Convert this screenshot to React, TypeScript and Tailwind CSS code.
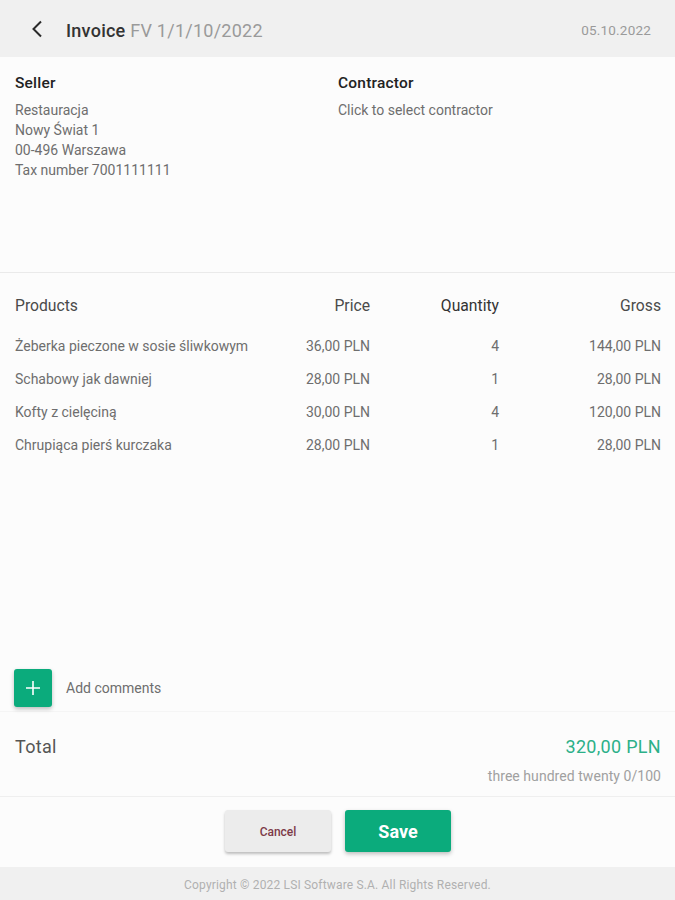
import React from "react";

const productos = [
  { nombre: "Żeberka pieczone w sosie śliwkowym", precio: "36,00 PLN", cantidad: "4", bruto: "144,00 PLN" },
  { nombre: "Schabowy jak dawniej", precio: "28,00 PLN", cantidad: "1", bruto: "28,00 PLN" },
  { nombre: "Kofty z cielęciną", precio: "30,00 PLN", cantidad: "4", bruto: "120,00 PLN" },
  { nombre: "Chrupiąca pierś kurczaka", precio: "28,00 PLN", cantidad: "1", bruto: "28,00 PLN" },
];

const App: React.FC = () => {
  return (
    <div className="w-[675px] h-[900px] flex flex-col bg-[#fcfcfc] font-['Roboto',sans-serif] overflow-hidden">
      {/* Header */}
      <div className="h-[57px] shrink-0 bg-[#f0f0f0] flex items-center pl-[27px] pr-[24px] pt-[3px]">
        <svg width="20" height="20" viewBox="0 0 20 20" fill="none" stroke="#2a2a2a" strokeWidth="2" className="shrink-0 -mt-[3px]">
          <path d="M14 2.5 L6.5 10 L14 17.5" />
        </svg>
        <div className="ml-[19px] text-[18px] tracking-[0.25px] text-[#333]">
          <span className="font-medium">Invoice</span> <span className="text-[#9a9a9a]">FV 1/1/10/2022</span>
        </div>
        <div className="ml-auto text-[13.5px] text-[#9a9a9a] tracking-[0.2px]">05.10.2022</div>
      </div>

      {/* Seller / contractor */}
      <div className="h-[216px] shrink-0 border-b border-[#eaeaea] flex pl-[15px] pt-[16px]">
        <div className="w-[323px]">
          <div className="text-[15.5px] leading-[20px] font-medium text-[#222] tracking-[0.2px]">Seller</div>
          <div className="mt-[7px] text-[14px] leading-[20px] text-[#6e6e6e]">
            <div>Restauracja</div>
            <div>Nowy Świat 1</div>
            <div>00-496 Warszawa</div>
            <div>Tax number 7001111111</div>
          </div>
        </div>
        <div>
          <div className="text-[15.5px] leading-[20px] font-medium text-[#222] tracking-[0.2px]">Contractor</div>
          <div className="mt-[7px] text-[14px] leading-[20px] text-[#6e6e6e]">Click to select contractor</div>
        </div>
      </div>

      {/* Products */}
      <div className="flex-1 px-[14px] pt-[23px]">
        <div className="flex items-center h-[20px] text-[15.7px] text-[#4a4a4a]">
          <div className="w-[276px] pl-[1px]">Products</div>
          <div className="w-[80px] text-right">Price</div>
          <div className="w-[129px] text-right text-[#333]">Quantity</div>
          <div className="w-[162px] text-right">Gross</div>
        </div>
        <div className="mt-[20px] flex flex-col gap-[13px]">
          {productos.map((p) => (
            <div key={p.nombre} className="flex items-center h-[20px] text-[14px] text-[#6e6e6e]">
              <div className="w-[276px] pl-[1px]">{p.nombre}</div>
              <div className="w-[80px] text-right">{p.precio}</div>
              <div className="w-[129px] text-right">{p.cantidad}</div>
              <div className="w-[162px] text-right">{p.bruto}</div>
            </div>
          ))}
        </div>
      </div>

      {/* Comments */}
      <div className="h-[43px] shrink-0 flex items-start pl-[14px] border-b border-[#f5f5f5]">
        <button className="w-[38px] h-[38px] rounded-[3px] bg-[#0bab7c] shadow-[0_2px_4px_rgba(0,0,0,0.25)] flex items-center justify-center">
          <svg width="14" height="14" viewBox="0 0 14 14" stroke="#fff" strokeWidth="1.6" fill="none">
            <path d="M7 0 V14 M0 7 H14" />
          </svg>
        </button>
        <div className="ml-[14px] h-[38px] flex items-center text-[14px] text-[#6e6e6e]">Add comments</div>
      </div>

      {/* Total */}
      <div className="h-[85px] shrink-0 border-b border-[#efefef] px-[14px] pt-[22px]">
        <div className="flex justify-between items-center h-[24px]">
          <span className="pl-[1px] text-[18px] text-[#555] tracking-[0.3px]">Total</span>
          <span className="text-[18px] text-[#2bb088] tracking-[0.3px]">320,00 PLN</span>
        </div>
        <div className="mt-[8px] text-right text-[14px] text-[#a0a0a0] tracking-[0.05px]">three hundred twenty 0/100</div>
      </div>

      {/* Buttons */}
      <div className="h-[70px] shrink-0 flex justify-center items-start pt-[13px] gap-[14px] pl-[1px]">
        <button className="w-[106px] h-[42px] pt-[1px] rounded-[3px] bg-[#ececec] shadow-[0_2px_3px_rgba(0,0,0,0.25)] text-[12px] font-medium text-[#7d3a48]">Cancel</button>
        <button className="w-[106px] h-[42px] rounded-[3px] bg-[#0bab7c] shadow-[0_2px_4px_rgba(0,0,0,0.25)] text-[18px] font-bold text-white">Save</button>
      </div>

      {/* Footer */}
      <div className="h-[33px] shrink-0 bg-[#f0f0f0] flex items-center justify-center pt-[3px] text-[12px] text-[#b0b0b0] tracking-[0.17px]">
        Copyright © 2022 LSI Software S.A. All Rights Reserved.
      </div>
    </div>
  );
};

export default App;
